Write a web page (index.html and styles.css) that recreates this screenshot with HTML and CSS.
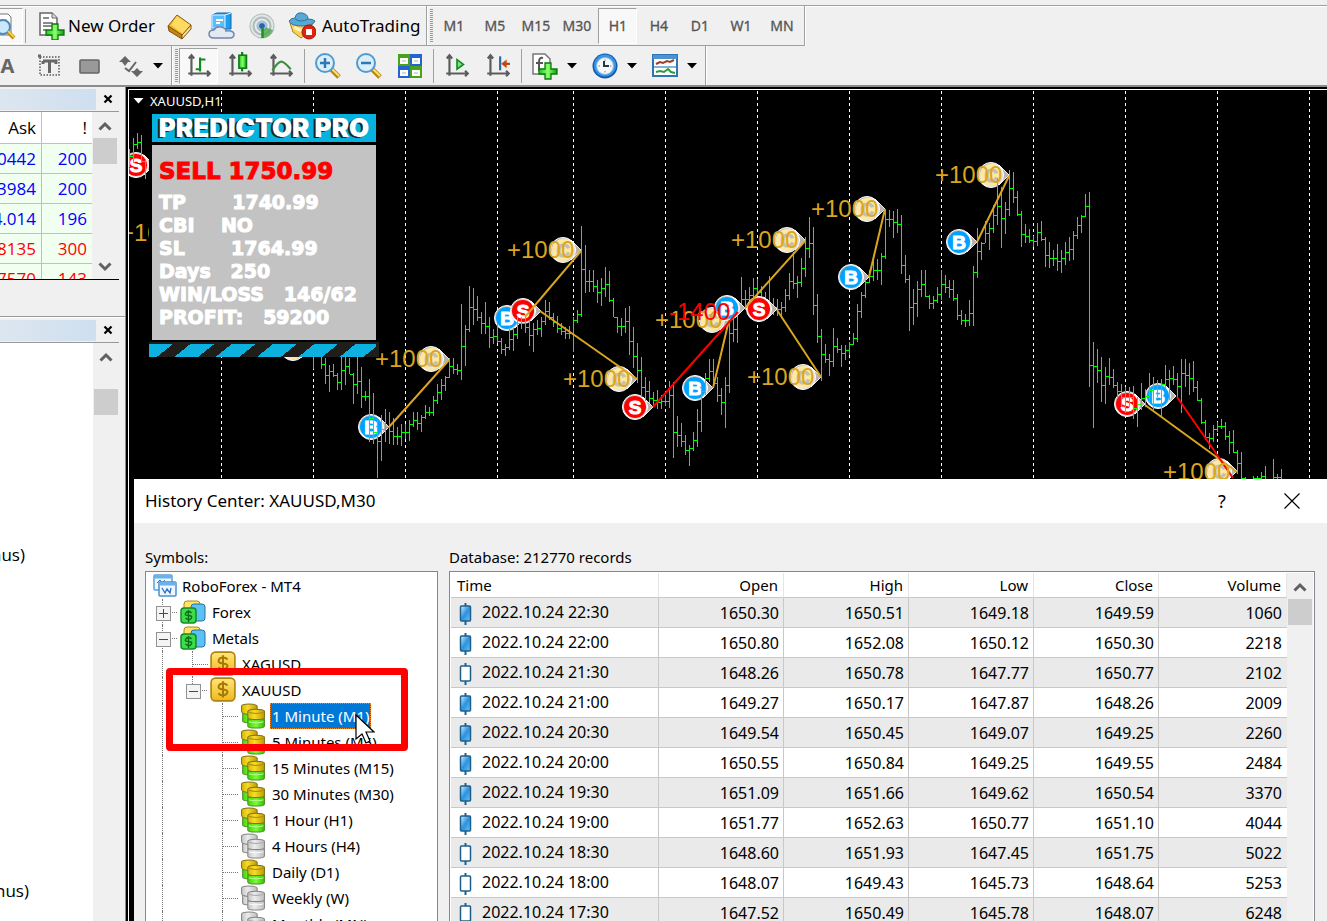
FILE: index.html
```html
<!DOCTYPE html>
<html lang="en">
<head>
<meta charset="utf-8">
<title>History Center: XAUUSD,M30</title>
<link rel="stylesheet" href="styles.css">
</head>
<body>
<svg class="defs" aria-hidden="true">
  <defs>
    <linearGradient id="gGreen" x1="0" y1="0" x2="1" y2="0"><stop offset="0" stop-color="#1fc81f"/><stop offset=".5" stop-color="#8cff6a"/><stop offset="1" stop-color="#0f9c12"/></linearGradient>
    <linearGradient id="gDb" x1="0" y1="0" x2="1" y2="0"><stop offset="0" stop-color="#3fd400"/><stop offset=".5" stop-color="#7dfa3c"/><stop offset="1" stop-color="#34bd00"/></linearGradient>
    <linearGradient id="gYel" x1="0" y1="0" x2="1" y2="0"><stop offset="0" stop-color="#d9b400"/><stop offset=".4" stop-color="#f7dc2a"/><stop offset="1" stop-color="#c09a00"/></linearGradient>
    <linearGradient id="gGry" x1="0" y1="0" x2="1" y2="0"><stop offset="0" stop-color="#c4c4c4"/><stop offset=".4" stop-color="#ececec"/><stop offset="1" stop-color="#bdbdbd"/></linearGradient>
    <linearGradient id="gGold" x1="0" y1="0" x2="0" y2="1"><stop offset="0" stop-color="#ffe679"/><stop offset="1" stop-color="#eeb91c"/></linearGradient>
    <linearGradient id="gCandle" x1="0" y1="0" x2="1" y2="1"><stop offset="0" stop-color="#d8f0ff"/><stop offset=".5" stop-color="#2b92df"/><stop offset="1" stop-color="#6cc0f2"/></linearGradient>
    <linearGradient id="gRim" x1="0" y1="0" x2="1" y2="1"><stop offset="0" stop-color="#8f8583"/><stop offset=".5" stop-color="#fff"/><stop offset="1" stop-color="#b9b3b1"/></linearGradient>
    <symbol id="db" viewBox="0 0 24 25">
      <path d="M1 3q0-2 7-2t8 2v6q-1 2-8 2T1 8z" fill="url(#gYel)" stroke="#80711d"/>
      <path d="M2 10q2 1 6 1t7-1v7q-1 2-7 2t-6-2z" fill="url(#gDb)" stroke="#5a8d3a"/>
      <path d="M7 8q0-2 8-2t8 2v6q0 2-8 2t-8-2z" fill="url(#gYel)" stroke="#80711d"/>
      <path d="M8 8.500q2 1.500 7 1.500t7-1.500" fill="none" stroke="#a48c10"/>
      <path d="M7 15q2 1 8 1t8-1v7q0 2-8 2t-8-2z" fill="url(#gDb)" stroke="#4c8c28"/>
      <path d="M8 18q2 1 7 1t7-1" fill="none" stroke="#b6ff8a"/>
    </symbol>
    <symbol id="dbGray" viewBox="0 0 24 25">
      <path d="M1 3q0-2 7-2t8 2v6q-1 2-8 2T1 8z" fill="url(#gGry)" stroke="#858585"/>
      <path d="M2 10q2 1 6 1t7-1v7q-1 2-7 2t-6-2z" fill="url(#gGry)" stroke="#858585"/>
      <path d="M7 8q0-2 8-2t8 2v6q0 2-8 2t-8-2z" fill="url(#gGry)" stroke="#858585"/>
      <path d="M8 8.500q2 1.500 7 1.500t7-1.500" fill="none" stroke="#aaa"/>
      <path d="M7 15q2 1 8 1t8-1v7q0 2-8 2t-8-2z" fill="url(#gGry)" stroke="#858585"/>
      <path d="M8 18q2 1 7 1t7-1" fill="none" stroke="#fafafa"/>
    </symbol>
    <symbol id="coin" viewBox="0 0 24 24">
      <rect x="1" y="1" width="22" height="21" rx="4" fill="url(#gGold)" stroke="#b0820f" stroke-width="1.500"/>
      <path d="M16 8q-1-2-4-2t-4 2.500 4 3 4 3-4 2.500-4-2M12 4v15" fill="none" stroke="#a87705" stroke-width="1.800"/>
    </symbol>
    <symbol id="group" viewBox="0 0 26 26">
      <rect x="4" y="2" width="16" height="14" rx="3" fill="#ffe466" stroke="#a48a1c"/>
      <rect x="11" y="5" width="14" height="17" rx="3" fill="#5cc1f7" stroke="#25749c"/>
      <rect x="1" y="9" width="15" height="15" rx="3" fill="#3ddc4c" stroke="#148a27" stroke-width="1.500"/>
      <path d="M11.500 14q-1-1.500-3-1.500t-3 2 3 2 3 2.300-3 1.700-3-1.500M8.500 11v12" fill="none" stroke="#0b6e19" stroke-width="1.400"/>
    </symbol>
    <symbol id="candleUp" viewBox="0 0 12 22"><path d="M6 0v22" stroke="#1c5f8b" stroke-width="2"/><rect x="1" y="3" width="10" height="15" rx="1" fill="url(#gCandle)" stroke="#1c5f8b" stroke-width="1.500"/></symbol>
    <symbol id="candleDown" viewBox="0 0 12 22"><path d="M6 0v22" stroke="#1c5f8b" stroke-width="2"/><rect x="1" y="3" width="10" height="15" rx="1" fill="#fff" stroke="#1c5f8b" stroke-width="1.500"/></symbol>
    <symbol id="axes" viewBox="0 0 26 26"><path d="M6 4v18M3 20h20M3.500 6 6 3l2.500 3M20.500 17.500 23 20l-2.500 2.500" fill="none" stroke="#5c5c5c" stroke-width="2"/></symbol>
    <symbol id="up" viewBox="0 0 14 10"><path d="M1.500 8.500 7 3l5.500 5.500" fill="none" stroke="#606060" stroke-width="3"/></symbol>
    <symbol id="down" viewBox="0 0 14 10"><path d="M1.500 1.500 7 7l5.500-5.500" fill="none" stroke="#606060" stroke-width="3"/></symbol>
    <symbol id="caret" viewBox="0 0 10 6"><path d="M0 0h10L5 5.500z"/></symbol>
    <symbol id="x" viewBox="0 0 10 10"><path d="m1.500 1.500 7 7m0-7-7 7" stroke="#000" stroke-width="2.200"/></symbol>
  </defs>
</svg>

<header class="toolbars">
  <div class="bar">
    <div class="group">
      <button class="tool pressed cut" aria-label="Strategy tester"><svg viewBox="0 0 28 28"><path d="M6 2h12l3 3v18H6z" fill="#fff" stroke="#777"/><path d="M9 8h8m-8 4h5" stroke="#999"/><circle cx="13" cy="15" r="7" fill="#c9e8fb" stroke="#5089b5" stroke-width="2"/><path d="m18 20 6 6" stroke="#c29016" stroke-width="4"/><path d="m18 19 6 6" stroke="#ffd95e" stroke-width="1.500"/></svg></button>
      <span class="sep"></span>
      <button class="tool wide"><svg viewBox="0 0 28 28"><path d="M3 1h12l5 5v17H3z" fill="#fff" stroke="#666" stroke-width="1.500"/><path d="M15 1v5h5" fill="#ddd" stroke="#666"/><path d="M6 6h6M6 11h10M6 14h10M6 18h4" stroke="#666" stroke-width="1.500"/><path d="M15 12h6v6h6v5h-6v5h-6v-5H9v-5h6z" fill="url(#gGreen)" stroke="#087a0d" stroke-width="1.300"/></svg>New Order</button>
      <button class="tool" aria-label="MetaEditor"><svg viewBox="0 0 28 28"><path d="M2 14 11 3l14 10-9 11z" fill="#eab42c" stroke="#8a5b06"/><path d="M11 4 24 13l-7 9L5 13z" fill="#ffda63"/><path d="m2 14 14 9v4L3 19z" fill="#c58610" stroke="#80520a"/><path d="m16 23 9-10v4l-9 10z" fill="#f4e0a0" stroke="#80520a"/></svg></button>
      <button class="tool" aria-label="Cloud storage"><svg viewBox="0 0 28 28"><path d="M5 3 10 1h14v16H5z" fill="#1e9cf0" stroke="#0d68b1"/><path d="M5 3h13v13H5zM18 3l6-2" fill="#59bdff" stroke="#e8f6ff"/><path d="M9 8h7M9 11h4" stroke="#fff" stroke-width="2"/><path d="M7 26q-5 0-5-4t5-4q2-4 7-3t5 4q7-1 8 3 0 4-4 4z" fill="#e3e9f3" stroke="#7186ab" stroke-width="1.500"/></svg></button>
      <button class="tool" aria-label="Signals"><svg viewBox="0 0 28 28"><circle cx="14" cy="14" r="12.500" fill="#aeb9b8"/><circle cx="14" cy="14" r="10.500" fill="none" stroke="#dfe6e6" stroke-width="2"/><circle cx="14" cy="14" r="6.500" fill="none" stroke="#e1e9f2" stroke-width="2"/><path d="M14 14v12a12 12 0 0 0 11-8z" fill="#41a743" opacity=".75"/><circle cx="14" cy="14" r="3.500" fill="#1e65b6" stroke="#b5d4f3"/><path d="M14.500 15v11" stroke="#16951c" stroke-width="2.500"/></svg></button>
      <button class="tool wide auto"><svg viewBox="0 0 28 28"><path d="M2 11h23l-6 11-6 4-8-6z" fill="#f9d25a" stroke="#b28112"/><path d="M1 9q2-3 6-3Q8 0 14 1t6 6q5 0 7 2-2 5-13 5T1 9z" fill="#58a8d5" stroke="#2b739d"/><path d="M7 7q6 4 13 0" fill="none" stroke="#2b739d"/><path d="M6 15q7 5 11 2" stroke="#fff3b4" fill="none" stroke-width="3"/><circle cx="21" cy="20" r="7" fill="#e2210e" stroke="#a31407"/><rect x="18" y="17" width="6" height="6" fill="#fff"/></svg>AutoTrading</button>
    </div>
    <div class="group periods">
      <span class="grip"></span>
      <button class="tool">M1</button><button class="tool">M5</button><button class="tool">M15</button><button class="tool">M30</button><button class="tool pressed">H1</button><button class="tool">H4</button><button class="tool">D1</button><button class="tool">W1</button><button class="tool">MN</button>
    </div>
  </div>
  <div class="bar second">
    <div class="group shapes">
      <button class="tool letter">A</button>
      <button class="tool" aria-label="Text label"><svg viewBox="0 0 28 28"><rect x="5" y="5" width="19" height="18" fill="none" stroke="#555" stroke-width="1.500" stroke-dasharray="1.500 1.500"/><path d="M3 4h3M8 9h13v3M8 12V9M14.500 9v12" fill="none" stroke="#666" stroke-width="3"/></svg></button>
      <button class="tool" aria-label="Rectangle"><svg viewBox="0 0 28 28"><rect x="4" y="8" width="19" height="13" rx="1" fill="#999" stroke="#666" stroke-width="1.600"/></svg></button>
      <button class="tool" aria-label="Arrows"><svg viewBox="0 0 28 28"><path d="m2 10 6-6 6 6h-3l-3 4-3-4zM14 19h3l3-3 3 3h3l-6 6z" fill="#666"/><path d="m8 16 4 3 7-9" stroke="#666" stroke-width="2" fill="none"/></svg></button>
      <button class="drop" aria-label="More arrows"><svg><use href="#caret"/></svg></button>
    </div>
    <div class="group charts">
      <span class="grip"></span>
      <button class="tool pressed" aria-label="Bar chart"><svg viewBox="0 0 26 26"><use href="#axes"/><path d="M14 5v13M14 7h5M10 16h4" stroke="#128a1d" stroke-width="2"/></svg></button>
      <button class="tool" aria-label="Candlesticks"><svg viewBox="0 0 26 26"><use href="#axes"/><path d="M15 0v18" stroke="#0b7c17" stroke-width="2"/><rect x="12" y="3" width="7" height="12" fill="url(#gGreen)" stroke="#0b7c17" stroke-width="1.500"/></svg></button>
      <button class="tool" aria-label="Line chart"><svg viewBox="0 0 26 26"><use href="#axes"/><path d="M5 17q6-9 9-8t8 7" fill="none" stroke="#3b8f42" stroke-width="2"/></svg></button>
      <span class="sep"></span>
      <button class="tool" aria-label="Zoom in"><svg viewBox="0 0 28 28"><path d="m17 17 8 8" stroke="#b8860b" stroke-width="5"/><path d="m18 17 7 7" stroke="#ffe07a" stroke-width="2"/><circle cx="11" cy="11" r="9" fill="#d9effc" stroke="#4f9bd0" stroke-width="2"/><path d="M6 11h10M11 6v10" stroke="#2f78b3" stroke-width="2.500"/></svg></button>
      <button class="tool" aria-label="Zoom out"><svg viewBox="0 0 28 28"><path d="m17 17 8 8" stroke="#b8860b" stroke-width="5"/><path d="m18 17 7 7" stroke="#ffe07a" stroke-width="2"/><circle cx="11" cy="11" r="9" fill="#d9effc" stroke="#4f9bd0" stroke-width="2"/><path d="M6 11h10" stroke="#2f78b3" stroke-width="2.500"/></svg></button>
      <button class="tool" aria-label="Tile windows"><svg viewBox="0 0 28 28"><path d="M2 2h12v12H2zM14 14h12v12H14z" fill="#4aa21c"/><path d="M14 2h12v12H14zM2 14h12v12H2z" fill="#2563cf"/><path d="M4 6h8v6H4zM16 6h8v6h-8zM4 18h8v6H4zM16 18h8v6h-8z" fill="#fff"/><path d="M6 9h4M18 9h4M6 21h4M18 21h4" stroke="#9bb"/></svg></button>
      <span class="sep"></span>
      <button class="tool" aria-label="Auto scroll"><svg viewBox="0 0 26 26"><use href="#axes"/><path d="M13 7v9l6-4.500z" fill="#7be57e" stroke="#128a1d" stroke-width="1.500"/></svg></button>
      <button class="tool" aria-label="Chart shift"><svg viewBox="0 0 26 26"><use href="#axes"/><path d="M15 4v13" stroke="#256d9c" stroke-width="2"/><path d="M24 11h-6" stroke="#b23c0c" stroke-width="2"/><path d="m21 7-5 4 5 4z" fill="#c9450f"/></svg></button>
      <span class="sep"></span>
      <button class="tool" aria-label="Indicators"><svg viewBox="0 0 28 28"><path d="M2 2h12l5 5v15H2z" fill="#fff" stroke="#777" stroke-width="1.500"/><path d="M12 6q-4-1-4 4v9M5 11h7" fill="none" stroke="#555" stroke-width="2"/><path d="M14 11h6v6h6v5h-6v5h-6v-5H8v-5h6z" fill="url(#gGreen)" stroke="#087a0d" stroke-width="1.300"/></svg></button>
      <button class="drop" aria-label="Indicator list"><svg><use href="#caret"/></svg></button>
      <button class="tool" aria-label="Periods"><svg viewBox="0 0 28 28"><circle cx="14" cy="14" r="12.500" fill="#0e5dad"/><circle cx="14" cy="13.500" r="11" fill="#3a95e8"/><circle cx="14" cy="14" r="8.500" fill="#f3f8fc" stroke="#8bb4d9"/><path d="M14 7.500v1.500M14 19v1.500M7.500 14H9M19 14h1.500" stroke="#789"/><path d="M13 9v5h5" fill="none" stroke="#333" stroke-width="2"/></svg></button>
      <button class="drop" aria-label="Period list"><svg><use href="#caret"/></svg></button>
      <button class="tool" aria-label="Templates"><svg viewBox="0 0 28 28"><rect x="2" y="3" width="24" height="21" fill="#fff" stroke="#2f75b5" stroke-width="2"/><path d="M2 5h24" stroke="#4b93d3" stroke-width="4"/><path d="M3 15h22" stroke="#5c99cc" stroke-width="1.500"/><path d="m5 12 4-2 3 1 4-2 3 1 4-2" fill="none" stroke="#a33d25" stroke-width="2"/><path d="m5 20 4-1 4 1 4-3 3 3 4 1" fill="none" stroke="#2b9b3c" stroke-width="2"/></svg></button>
      <button class="drop" aria-label="Template list"><svg><use href="#caret"/></svg></button>
    </div>
  </div>
</header>

<main class="workspace">
  <aside class="side">
    <section class="panel watch">
      <div class="caption"><span></span><button aria-label="Close market watch"><svg><use href="#x"/></svg></button></div>
      <div class="scroller">
        <div class="quotes">
          <table>
            <thead><tr><th>Ask</th><th>!</th></tr></thead>
            <tbody>
              <tr><td>0442</td><td>200</td></tr>
              <tr><td>3984</td><td>200</td></tr>
              <tr><td>4.014</td><td>196</td></tr>
              <tr class="fall"><td>8135</td><td>300</td></tr>
              <tr class="fall"><td>7570</td><td>143</td></tr>
            </tbody>
          </table>
        </div>
        <div class="scroll"><svg><use href="#up"/></svg><i></i><svg class="end"><use href="#down"/></svg></div>
      </div>
    </section>
    <section class="panel navigator">
      <div class="caption"><span></span><button aria-label="Close navigator"><svg><use href="#x"/></svg></button></div>
      <div class="scroller">
        <div class="names"><p>nus)</p><p>nus)</p></div>
        <div class="scroll"><svg><use href="#up"/></svg><i></i></div>
      </div>
    </section>
  </aside>

  <section class="chart">
    <svg class="plot" id="plot" aria-label="XAUUSD hourly bar chart"></svg>
    <h1 class="chart-name"><svg><use href="#caret"/></svg>XAUUSD,H1</h1>
    <div class="predictor">
      <h2>PREDICTOR PRO</h2>
      <div class="stats">
        <p class="signal">SELL 1750.99</p>
        <p>TP       <b>1740.99</b></p>
        <p>CBI    <b>NO</b></p>
        <p>SL       <b>1764.99</b></p>
        <p>Days   <b>250</b></p>
        <p>WIN/LOSS   <b>146/62</b></p>
        <p>PROFIT:   <b>59200</b></p>
      </div>
      <div class="stripes"></div>
    </div>
  </section>
</main>

<div class="dialog" role="dialog" aria-labelledby="dlgTitle">
  <div class="dialog-title">
    <h2 id="dlgTitle">History Center: XAUUSD,M30</h2>
    <button aria-label="Help">?</button>
    <button aria-label="Close"><svg viewBox="0 0 16 16"><path d="m.5.5 15 15m0-15-15 15" stroke="#000" stroke-width="1.200"/></svg></button>
  </div>
  <div class="dialog-body">
    <div class="pane symbols">
      <h3>Symbols:</h3>
      <ul class="tree">
        <li class="root"><svg viewBox="0 0 24 24"><rect x="1" y="1" width="18" height="15" rx="1" fill="#eef7ff" stroke="#5c9fd6" stroke-width="1.500"/><path d="M1 3h18" stroke="#69b3ec" stroke-width="3"/><path d="m4 9 3-3 2 3 3-3" fill="none" stroke="#2a6fc0"/><rect x="6" y="8" width="17" height="14" rx="1" fill="#eef7ff" stroke="#4a90cc" stroke-width="1.500"/><path d="M6 10h17" stroke="#69b3ec" stroke-width="3"/><path d="m9 14 3 5 2-4 3 4 1-5" fill="none" stroke="#2a6fc0" stroke-width="1.300"/></svg>RoboForex - MT4</li>
        <li><i class="v h t plus"></i><svg><use href="#group"/></svg><span>Forex</span></li>
        <li><i class="v h t"></i><svg><use href="#group"/></svg><span>Metals</span></li>
        <li><i class="v"></i><i class="v h"></i><svg><use href="#coin"/></svg><span>XAGUSD</span></li>
        <li><i class="v"></i><i class="v last h t"></i><svg><use href="#coin"/></svg><span>XAUUSD</span></li>
        <li><i class="v"></i><i></i><i class="v h"></i><svg><use href="#db"/></svg><span class="sel">1 Minute (M1)</span></li>
        <li><i class="v"></i><i></i><i class="v h"></i><svg><use href="#db"/></svg><span>5 Minutes (M5)</span></li>
        <li><i class="v"></i><i></i><i class="v h"></i><svg><use href="#db"/></svg><span>15 Minutes (M15)</span></li>
        <li><i class="v"></i><i></i><i class="v h"></i><svg><use href="#db"/></svg><span>30 Minutes (M30)</span></li>
        <li><i class="v"></i><i></i><i class="v h"></i><svg><use href="#db"/></svg><span>1 Hour (H1)</span></li>
        <li><i class="v"></i><i></i><i class="v h"></i><svg><use href="#dbGray"/></svg><span>4 Hours (H4)</span></li>
        <li><i class="v"></i><i></i><i class="v h"></i><svg><use href="#db"/></svg><span>Daily (D1)</span></li>
        <li><i class="v"></i><i></i><i class="v h"></i><svg><use href="#dbGray"/></svg><span>Weekly (W)</span></li>
        <li><i class="v"></i><i></i><i class="v h"></i><svg><use href="#dbGray"/></svg><span>Monthly (MN)</span></li>
      </ul>
    </div>
    <div class="pane database">
      <h3>Database: 212770 records</h3>
      <div class="records">
        <table>
          <colgroup><col class="c-time"><col class="c-num"><col class="c-num"><col class="c-num"><col class="c-num"><col></colgroup>
          <thead><tr><th>Time</th><th>Open</th><th>High</th><th>Low</th><th>Close</th><th>Volume</th></tr></thead>
          <tbody>
            <tr><td><svg><use href="#candleUp"/></svg>2022.10.24 22:30</td><td>1650.30</td><td>1650.51</td><td>1649.18</td><td>1649.59</td><td>1060</td></tr>
            <tr><td><svg><use href="#candleUp"/></svg>2022.10.24 22:00</td><td>1650.80</td><td>1652.08</td><td>1650.12</td><td>1650.30</td><td>2218</td></tr>
            <tr><td><svg><use href="#candleDown"/></svg>2022.10.24 21:30</td><td>1648.26</td><td>1650.78</td><td>1647.77</td><td>1650.77</td><td>2102</td></tr>
            <tr><td><svg><use href="#candleUp"/></svg>2022.10.24 21:00</td><td>1649.27</td><td>1650.17</td><td>1647.87</td><td>1648.26</td><td>2009</td></tr>
            <tr><td><svg><use href="#candleUp"/></svg>2022.10.24 20:30</td><td>1649.54</td><td>1650.45</td><td>1649.07</td><td>1649.25</td><td>2260</td></tr>
            <tr><td><svg><use href="#candleUp"/></svg>2022.10.24 20:00</td><td>1650.55</td><td>1650.84</td><td>1649.25</td><td>1649.55</td><td>2484</td></tr>
            <tr><td><svg><use href="#candleUp"/></svg>2022.10.24 19:30</td><td>1651.09</td><td>1651.66</td><td>1649.62</td><td>1650.54</td><td>3370</td></tr>
            <tr><td><svg><use href="#candleUp"/></svg>2022.10.24 19:00</td><td>1651.77</td><td>1652.63</td><td>1650.77</td><td>1651.10</td><td>4044</td></tr>
            <tr><td><svg><use href="#candleDown"/></svg>2022.10.24 18:30</td><td>1648.60</td><td>1651.93</td><td>1647.45</td><td>1651.75</td><td>5022</td></tr>
            <tr><td><svg><use href="#candleDown"/></svg>2022.10.24 18:00</td><td>1648.07</td><td>1649.43</td><td>1645.73</td><td>1648.64</td><td>5253</td></tr>
            <tr><td><svg><use href="#candleDown"/></svg>2022.10.24 17:30</td><td>1647.52</td><td>1650.49</td><td>1645.78</td><td>1648.07</td><td>6248</td></tr>
          </tbody>
        </table>
        <div class="scroll"><svg><use href="#up"/></svg><i></i></div>
      </div>
    </div>
  </div>
  <div class="highlight"></div>
  <svg class="cursor" viewBox="0 0 20 30"><path d="M1 1v24l6-5 4 9 4-2-4-9h8z" fill="#fff" stroke="#000" stroke-width="1.200"/></svg>
</div>
<script src="chart.js"></script>
</body>
</html>
```
FILE: styles.css
```css
* { box-sizing: border-box; }

html, body { height: 100%; }

body {
  margin: 0;
  display: flex;
  flex-direction: column;
  overflow: hidden;
  position: relative;
  background: #f0f0f0;
  color: #000;
  font: 16px/24px "Noto Sans", "Open Sans", sans-serif;
}

h1, h2, h3, p, ul { margin: 0; padding: 0; font-weight: 400; }
button { border: 0; padding: 0; background: none; color: inherit; font: inherit; }
.defs { position: absolute; width: 0; height: 0; }

/* Toolbars */
.toolbars { flex: none; padding-top: 5px; border-bottom: 2px solid #8c8c8c; }
.bar { display: flex; height: 41px; border-top: 1px solid #a0a0a0; box-shadow: inset 0 1px #fff; }
.bar.second { height: 39px; border-top: 0; box-shadow: none; }
.group { display: flex; align-items: center; border-right: 1px solid #a0a0a0; border-bottom: 1px solid #a0a0a0; box-shadow: 1px 0 #fff; }
.second .group { border-bottom: 0; }
.tool { display: flex; flex: none; align-items: center; justify-content: center; width: 39px; height: 36px; margin-right: 2px; border: 1px solid transparent; }
.tool svg { flex: none; width: 28px; height: 28px; }
.tool.pressed { background: #f8f8f8; border-color: #a0a0a0 #fff #fff #a0a0a0; }
.tool.cut { margin-left: -16px; margin-right: 2px; }
.tool.wide { width: auto; gap: 3px; padding: 0 3px 0 8px; font-size: 17px; }
.tool.wide.auto { gap: 6px; padding: 0 3px 0 3px; }
.sep { width: 1px; height: 34px; background: #a0a0a0; margin: 0 2px 0 0; }
.charts .sep { margin: 0 3px 0 2px; }
.grip { width: 3px; height: 34px; margin: 0 1px 0 3px; background: repeating-linear-gradient(#999 0 1px, #f0f0f0 1px 2px); }
.periods .tool { font: 14px/20px "Noto Sans", sans-serif; color: #555; -webkit-text-stroke: 0.300px #555; }
.periods .tool:last-child { margin-right: 3px; }
.shapes { margin-left: -12px; padding-right: 7px; }
.letter { font: 700 20px/24px "Noto Sans", sans-serif; color: #666; }
.drop { width: 12px; height: 36px; }
.drop svg { display: block; margin: auto; width: 10px; height: 6px; }
.charts .drop { width: 14px; margin: 0 6px 0 -1px; }

/* Left panels */
.workspace { flex: 1; display: flex; min-height: 0; }
.side { flex: none; width: 125px; display: flex; flex-direction: column; }
.panel { display: flex; flex-direction: column; padding-right: 6px; min-height: 0; }
.watch { height: 230px; padding-bottom: 36px; border-bottom: 1px solid #999; }
.navigator { flex: 1; border-top: 1px solid #fff; }
.caption { display: flex; align-items: center; height: 25px; border-bottom: 1px solid #999; flex: none; }
.caption span { width: 96px; height: 21px; background: linear-gradient(90deg, #dce6ef, #cfdfef); }
.caption button { flex: 1; }
.caption svg { display: block; margin: auto; width: 10px; height: 10px; }
.scroller { flex: 1; display: flex; min-height: 0; overflow: hidden; }
.watch .scroller { border-bottom: 1px solid #000; }
.quotes { width: 92px; display: flex; justify-content: flex-end; overflow: hidden; background: #fff; }
.quotes table { flex: none; width: 130px; border-collapse: separate; border-spacing: 0; align-self: flex-start; }
.quotes th, .quotes td { height: 30px; padding: 0 5px; text-align: right; border-bottom: 1px solid #c0c0c0; border-right: 1px solid #c0c0c0; font: 17px/24px "Open Sans", "Noto Sans", sans-serif; }
.quotes th { height: 32px; }
.quotes th:last-child, .quotes td:last-child { width: 50px; border-right: 0; }
.quotes td { background: #f0fff0; color: #00f; }
.quotes .fall td { color: #f00; }
.scroll { flex: none; width: 26px; display: flex; flex-direction: column; align-items: center; background: #f0f0f0; }
.scroll svg { width: 14px; height: 10px; margin: 9px 0 7px; }
.scroll i { width: 24px; height: 26px; background: #cdcdcd; }
.scroll .end { margin-top: auto; }
.names { width: 93px; background: #fff; overflow: hidden; }
.names p { padding-top: 200px; font: 17px/24px "Open Sans", "Noto Sans", sans-serif; margin-left: -9px; }
.names p + p { padding-top: 312px; margin-left: -5px; }
.navigator .scroll i { margin-top: 20px; }

/* Chart */
.chart { flex: 1; position: relative; min-width: 0; overflow: hidden; background: #000; border-left: 1px solid #8c8c8c; }
.plot { position: absolute; inset: 0; width: 100%; height: 100%; }
.chart-name { position: absolute; left: 7px; top: 4px; display: flex; align-items: center; gap: 6px; color: #fff; font: 13px/20px "Noto Sans", sans-serif; }
.chart-name svg { width: 11px; height: 6px; fill: #fff; }
.predictor { position: absolute; left: 23px; top: 25px; width: 230px; padding: 2px 3px 0; background: #000; }
.predictor h2 { height: 28px; background: #06b2de; color: #fff; text-align: center; font: 900 26px/28px "Inter", "Roboto", sans-serif; text-shadow: -2px 1px #222; white-space: nowrap; }
.stats { margin-top: 3px; height: 195px; padding: 14px 7px 0; background: #c3c3c3; color: #fff; font: 700 19px/23px "DejaVu Sans", sans-serif; -webkit-text-stroke: 1px; }
.stats p { white-space: pre; }
.stats p, .stats b { font-weight: 700; }
.stats .signal { color: #f00; font-size: 23px; line-height: 25px; margin-bottom: 7px; }
.stripes { height: 15px; margin: 2px -3px 0; border: solid #201e1b; border-width: 2px 3px 0 0; background: repeating-linear-gradient(141deg, #0cb1e0 0 15px, #201e1b 15px 26px); }

.grid { stroke: #fff; stroke-dasharray: 3 3; }
.bars { stroke: #0f0; fill: none; shape-rendering: crispEdges; }
.trade { stroke: #daa520; stroke-width: 2; }
.loss { stroke: #f00; }
.profit-label { font: 24px "Liberation Sans", sans-serif; fill: #daa520; }
.loss-label { font: 24px "Liberation Sans", sans-serif; fill: #f00; }
.marker-letter { font: 700 19px "Liberation Sans", sans-serif; fill: #fff; stroke: #fff; text-anchor: middle; }
.marker-letter.C { fill: #c4c0b4; stroke: #c4c0b4; }

/* History dialog */
.dialog { position: absolute; left: 134px; right: 0; top: 479px; bottom: 0; display: flex; flex-direction: column; overflow: hidden; background: #f0f0f0; }
.dialog-title { flex: none; display: flex; align-items: center; height: 44px; padding: 0 24px 0 11px; background: #fff; }
.dialog-title h2 { flex: 1; font: 17px/24px "Noto Sans", sans-serif; }
.dialog-title button { width: 22px; font: 18px/24px "Noto Sans", sans-serif; margin-left: 48px; }
.dialog-title svg { display: block; margin: auto; width: 16px; height: 16px; }
.dialog-body { flex: 1; display: flex; gap: 11px; padding: 22px 12px 0 11px; min-height: 0; }
.pane { display: flex; flex-direction: column; min-height: 0; }
.pane h3 { flex: none; font-size: 15px; line-height: 24px; margin-bottom: 2px; }
.symbols { flex: none; width: 293px; }
.database { flex: 1; min-width: 0; }
.tree { flex: 1; border: 1px solid #828790; border-bottom: 0; background: #fff; list-style: none; overflow: hidden; padding: 1px 0 0 2px; white-space: nowrap; font-size: 15px; }
.tree li { display: flex; align-items: center; height: 26px; }
.tree li > svg { flex: none; width: 26px; height: 26px; margin: 0 4px 0 2px; }
.tree .root { padding-left: 3px; }
.tree .root svg { width: 24px; height: 24px; margin-right: 5px; }
.tree span { padding: 0 2px; line-height: 26px; }
.tree .sel { background: #0078d7; color: #fff; outline: 1px dotted #f58220; outline-offset: -1px; }
.tree i { position: relative; flex: none; width: 30px; height: 26px; }
.tree .v::before { content: ""; position: absolute; left: 14px; top: 0; bottom: 0; border-left: 1px dotted #777; }
.tree .last::before { bottom: 13px; }
.tree .h::after { content: ""; position: absolute; left: 14px; right: 0; top: 13px; border-top: 1px dotted #777; }
.tree .t { background: linear-gradient(90deg, #777 50%, transparent 50%) 22px 13px / 2px 1px repeat-x; background-clip: content-box; padding-left: 22px; }
.tree .t::after { left: 8px; right: auto; top: 7px; width: 13px; height: 13px; border: 1px solid #919191; background: linear-gradient(#2d4b8c, #2d4b8c) center / 9px 1px no-repeat, #f4f4f4; }
.tree .plus::after { background: linear-gradient(#2d4b8c, #2d4b8c) center / 9px 1px no-repeat, linear-gradient(#2d4b8c, #2d4b8c) center / 1px 9px no-repeat, #f4f4f4; }

.records { flex: 1; display: flex; border: 1px solid #828790; border-bottom: 0; background: #fff; overflow: hidden; padding: 1px 1px 0; }
.records table { flex: 1; align-self: flex-start; table-layout: fixed; border-collapse: separate; border-spacing: 0; }
.c-time { width: 208px; }
.c-num { width: 125px; }
.records th { height: 25px; padding: 0 5px 0 6px; font-size: 15px; line-height: 22px; font-weight: 400; text-align: right; border-bottom: 1px solid #c8c8c8; border-right: 1px solid #e5e5e5; }
.records td { height: 30px; padding: 0 4px 0 8px; text-align: right; border-bottom: 1px solid #c8c8c8; border-right: 1px solid #c8c8c8; }
.records th:first-child, .records td:first-child { text-align: left; }
.records td:last-child { border-right: 0; padding-right: 5px; }
.records tbody tr:nth-child(odd) { background: #eaeaea; }
.records td svg { width: 13px; height: 22px; margin-right: 10px; vertical-align: middle; }

.highlight { position: absolute; left: 32px; top: 189px; width: 242px; height: 83px; border: 7px solid #f00; border-radius: 4px; }
.cursor { position: absolute; left: 221px; top: 235px; width: 20px; height: 30px; }
```
FILE: chart.js
```javascript
// Each bar: x, high, low.
const bars = [
[129,149,167],[133,138,163],[137,133,149],[141,135,163],[145,159,179],
[313,355,369],[321,355,369],[325,358,384],[329,365,392],[333,364,377],[337,373,390],[341,355,390],[345,355,385],[349,358,374],[353,373,404],[357,355,394],[361,367,408],[365,391,401],[369,379,442],[373,393,444],[377,420,478],[381,415,461],[385,409,442],[389,412,444],[393,418,445],[397,427,445],[401,424,446],[405,424,439],[409,420,441],[413,412,427],[417,412,430],[421,415,432],[425,405,419],[429,407,416],[433,396,416],[437,384,404],[441,379,400],[445,376,391],[449,358,378],[453,358,374],[457,364,375],[461,304,380],[465,325,366],[469,286,332],[473,288,325],[477,296,321],[481,312,334],[485,302,334],[489,317,348],[493,329,344],[497,323,343],[501,338,354],[505,344,356],[509,327,350],[513,328,351],[517,317,339],[521,317,329],[525,317,333],[529,320,346],[533,323,352],[537,320,335],[541,317,337],[545,300,325],[549,302,320],[553,313,327],[557,316,333],[561,323,335],[565,327,339],[569,326,339],[573,317,352],[577,310,323],[581,226,317],[585,245,293],[589,270,292],[593,270,292],[597,280,303],
[601,278,306],[605,267,297],[609,271,302],[613,298,317],[617,317,333],[621,318,336],[625,308,333],[629,306,355],[633,327,368],[637,343,383],[641,357,397],[645,377,401],[649,381,403],[653,392,407],[657,390,409],[661,395,409],[665,395,406],[669,381,408],[673,382,458],[677,416,447],[681,423,447],[685,435,455],[689,445,466],[693,432,451],[697,409,447],[701,386,432],[705,373,395],[709,359,382],[713,359,388],[717,377,402],[721,388,415],[725,377,428],[729,323,393],[733,315,342],[737,307,343],[741,277,307],[745,290,310],[749,287,308],[753,278,303],[757,279,297],[761,286,302],[765,292,307],[769,276,310],[773,298,315],[777,299,316],[781,302,316],[785,289,312],[789,273,300],[793,252,289],[797,276,298],[801,258,287],[805,237,277],[809,217,258],[813,227,315],[817,294,343],[821,329,381],[825,344,363],[829,354,376],[833,328,367],[837,338,353],[841,345,367],[845,345,360],[849,342,355],
[853,333,345],[857,304,342],[861,292,318],[865,280,298],[869,270,283],[873,258,281],[877,259,280],[881,253,285],[885,209,259],[889,210,227],[893,211,238],[897,209,233],[901,215,274],[905,255,283],[909,275,331],[913,289,325],[917,281,317],[921,270,297],[925,270,297],[929,295,309],[933,296,309],[937,287,303],[941,270,300],[945,275,293],[949,280,298],[953,280,301],[957,294,320],[961,310,325],[965,314,327],[969,300,326],[973,266,326],[977,228,278],[981,242,260],[985,221,243],[989,223,250],[993,205,233],[997,178,225],[1001,187,248],[1005,202,234],[1009,170,216],[1013,172,203],[1017,191,216],[1021,211,247],[1025,224,243],[1029,229,243],[1033,236,247],[1037,223,246],[1041,221,241],[1045,237,267],[1049,242,268],[1053,250,266],[1057,244,271],[1061,250,273],[1065,242,265],[1069,237,261],[1073,231,260],[1077,217,239],[1081,215,233],[1085,194,217],[1089,192,387],
[1093,342,428],[1097,349,383],[1101,357,402],[1105,367,404],[1109,358,385],[1113,369,388],[1117,382,397],[1121,384,407],[1125,387,413],[1129,387,407],[1133,386,419],[1137,397,427],[1141,383,410],[1145,389,407],[1149,373,402],[1153,377,410],[1157,380,397],[1161,379,418],[1165,365,388],[1169,370,400],[1173,366,385],[1177,373,398],[1181,359,413],[1185,359,387],[1189,363,395],[1193,361,392],[1197,381,401],[1201,398,424],[1205,420,440],[1209,433,449],[1213,425,442],[1217,422,432],[1221,419,429],[1225,422,440],[1229,431,454],[1233,430,453],[1237,450,474],[1241,452,479],[1245,477,480],[1253,476,480],[1257,476,480],[1261,472,480],[1265,466,480],[1273,459,480],[1277,474,480],[1281,469,480]
];

const gridX = [221, 313, 405, 497, 573, 665, 757, 849, 941, 1033, 1125, 1217, 1309];

// Each marker: kind, centre x, centre y.
const under = [["S",136,165],["C",293,348],["B",371,427],["C",431,359],["B",507,318],["S",523,311],["C",563,250],["C",619,379],["S",635,407],["B",695,388],["C",787,240],["C",803,377],["B",851,277],["C",867,209],["B",959,242],["C",991,175],["S",1127,404],["B",1158,396],["C",1219,471]];
const over = [["C",712,320],["B",727,308],["S",759,309]];

const wins = [[389,427,449,360],[525,317,581,251],[540,311,637,379],[713,388,729,320],[745,308,805,241],[777,310,821,377],[869,277,885,209],[977,242,1009,176],[1145,405,1237,472]];
const losses = [[653,407,738,312],[1177,397,1233,478]];
const labels = [[120,233],[375,359],[507,250],[563,379],[655,320],[731,240],[747,377],[811,209],[935,175],[1163,472]];

const fill = { S: "#f00", B: "#00a2ff", C: "#ffe9a0" };

function marker([kind, x, y]) {
  return `<path d="M${x + 8} ${y - 10}L${x + 18} ${y}L${x + 8} ${y + 10}z" fill="#b9b3b1" stroke="#eee"/>` +
    `<circle cx="${x}" cy="${y}" r="12.5" fill="url(#gRim)" stroke="#fff"/>` +
    `<circle cx="${x}" cy="${y}" r="11" fill="${fill[kind]}"/>` +
    `<text class="marker-letter ${kind}" x="${x}" y="${y + 7}">${kind}</text>`;
}

function barPath() {
  let d = "";
  bars.forEach(([x, high, low], i) => {
    d += `M${x + 0.5} ${high}V${low}`;
    const next = bars[i + 1];
    if (next && next[0] - x === 4) {
      const y = Math.round((Math.max(high, next[1]) + Math.min(low, next[2])) / 2) + 0.5;
      d += `M${x + 1} ${y}h3`;
    }
  });
  return d;
}

const line = (cls) => ([a, b, c, d]) => `<line class="${cls}" x1="${a}" y1="${b}" x2="${c}" y2="${d}"/>`;

document.getElementById("plot").innerHTML =
  `<g transform="translate(-126 -87)">
    ${gridX.map((x) => `<line class="grid" x1="${x + 0.5}" y1="91" x2="${x + 0.5}" y2="480"/>`).join("")}
    ${under.map(marker).join("")}
    <path class="bars" d="${barPath()}"/>
    ${over.map(marker).join("")}
    ${wins.map(line("trade")).join("")}
    ${losses.map(line("trade loss")).join("")}
    ${labels.map(([x, y]) => `<text class="profit-label" x="${x}" y="${y + 8}">+1000</text>`).join("")}
    <text class="loss-label" x="669" y="320">-1400</text>
    <rect x="126" y="87" width="2" height="2000" fill="#000"/>
    <path d="M4000 89.5H128.500V2000" fill="none" stroke="#fff"/>
  </g>`;
```
